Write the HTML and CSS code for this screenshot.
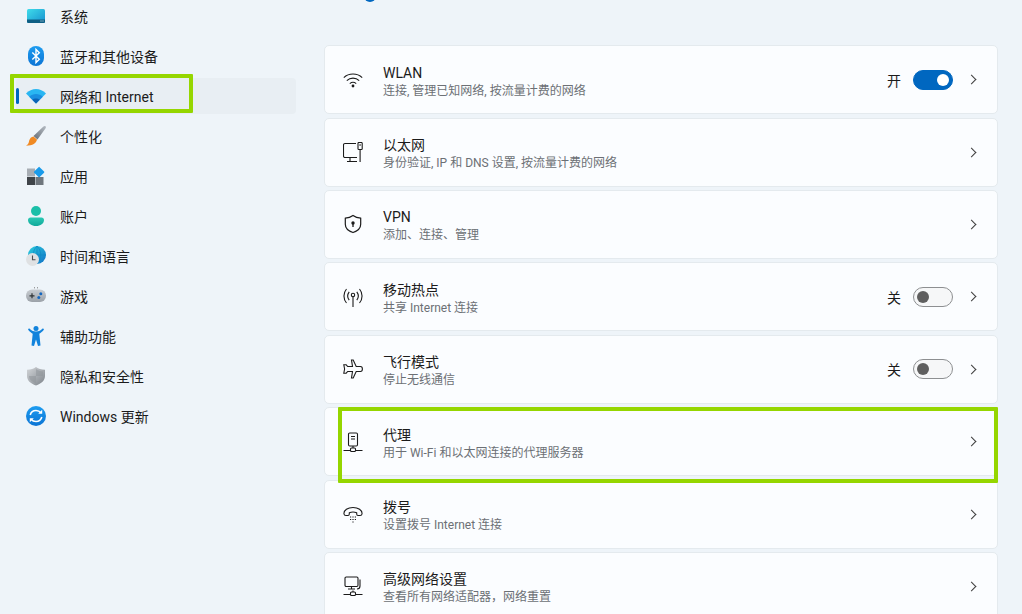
FILE: index.html
```html
<!DOCTYPE html>
<html lang="zh-CN">
<head>
<meta charset="utf-8">
<title>网络和 Internet</title>
<link rel="stylesheet" href="styles.css">
</head>
<body>
<svg class="defs" width="0" height="0" aria-hidden="true">
  <defs>
    <linearGradient id="gSys" x1="0" y1="0" x2="1" y2="1"><stop offset="0" stop-color="#3fdcea"/><stop offset="1" stop-color="#1690cf"/></linearGradient>
    <linearGradient id="gBlue" x1="0" y1="0" x2="0" y2="1"><stop offset="0" stop-color="#1d9cf0"/><stop offset="1" stop-color="#0c74d4"/></linearGradient>
    <linearGradient id="gBrush" x1="1" y1="0" x2="0" y2="1"><stop offset="0" stop-color="#b5bcc4"/><stop offset="1" stop-color="#666d75"/></linearGradient>
    <linearGradient id="gTeal" x1="0" y1="0" x2="0" y2="1"><stop offset="0" stop-color="#2cc9b4"/><stop offset="1" stop-color="#0fa89a"/></linearGradient>
    <linearGradient id="gGlobe" x1="0" y1="0" x2="1" y2="1"><stop offset="0" stop-color="#2bd0dd"/><stop offset="1" stop-color="#0f6fc6"/></linearGradient>
    <linearGradient id="gPad" x1="0" y1="0" x2="0" y2="1"><stop offset="0" stop-color="#c9cdd2"/><stop offset="1" stop-color="#9ba1a8"/></linearGradient>
    <linearGradient id="gShield" x1="0" y1="0" x2="1" y2="1"><stop offset="0" stop-color="#d3d6d9"/><stop offset="1" stop-color="#7d838a"/></linearGradient>
  </defs>
</svg>

<div class="top-dot"></div>

<div class="layout">
  <nav class="sidebar">
    <a class="nav-item">
      <svg class="nav-icon" viewBox="0 0 20 20"><rect x="1" y="3" width="18" height="14" rx="1.5" fill="url(#gSys)"/><path d="M1 13.5h18V15.5a1.5 1.5 0 0 1-1.500 1.500H2.500A1.500 1.500 0 0 1 1 15.500z" fill="#0f5f85"/><path d="M14.500 15h1M16.500 15h1" stroke="#cfeaf5" stroke-width="1"/></svg>
      <span>系统</span>
    </a>
    <a class="nav-item">
      <svg class="nav-icon" viewBox="0 0 20 20"><rect x="2" y="0" width="16" height="20" rx="8" fill="url(#gBlue)"/><path d="M6.300 6.500l7 6.800L10 16.500V3.500l3.300 3.200-7 6.800" fill="none" stroke="#fff" stroke-width="1.400"/></svg>
      <span>蓝牙和其他设备</span>
    </a>
    <a class="nav-item active">
      <svg class="nav-icon" viewBox="0 0 20 20"><path d="M0 7.500C5.500 1.500 14.500 1.500 20 7.500L10 17.500z" fill="#29b6f2"/><path d="M3.200 10.700C7 7 13 7 16.800 10.700L10 17.500z" fill="#1a8fe0"/><path d="M6.300 13.800C8.300 12 11.700 12 13.700 13.800L10 17.500z" fill="#0b62b5"/></svg>
      <span>网络和 Internet</span>
    </a>
    <a class="nav-item">
      <svg class="nav-icon" viewBox="0 0 20 20"><path d="M19.500.3c.6.500.5 1.400-.1 2.300L11.500 13.500 7.500 10 17.200.8c.8-.7 1.700-1 2.300-.5z" fill="url(#gBrush)"/><path d="M7.500 10.500l3.500 3c-.6 3.700-4.200 6-11 6.300 2.800-1.500 2.700-3.300 3.200-5.200.5-2 2.200-3.900 4.300-4.100z" fill="#f08a24"/></svg>
      <span>个性化</span>
    </a>
    <a class="nav-item">
      <svg class="nav-icon" viewBox="0 0 20 20"><rect x="1" y="2.500" width="8" height="8" fill="#a7adb4"/><rect x="1" y="11" width="8" height="8" fill="#3f4449"/><rect x="9.500" y="11" width="8" height="8" fill="#6f767d"/><rect x="9.200" y="2.200" width="7.800" height="7.800" rx=".8" transform="rotate(45 13.100 6.100)" fill="#1a9bea"/></svg>
      <span>应用</span>
    </a>
    <a class="nav-item">
      <svg class="nav-icon" viewBox="0 0 20 20"><circle cx="10" cy="5" r="5" fill="#1bbfa9"/><path d="M2 14c0-1.500 1-2.500 2.500-2.500h11c1.500 0 2.500 1 2.500 2.500 0 3.500-3.500 6-8 6s-8-2.500-8-6z" fill="url(#gTeal)"/></svg>
      <span>账户</span>
    </a>
    <a class="nav-item">
      <svg class="nav-icon" viewBox="0 0 20 20"><circle cx="11" cy="9" r="9" fill="url(#gGlobe)"/><path d="M11 0v18M2 9h18M11 0c-5 5-5 13 0 18M11 0c5 5 5 13 0 18" fill="none" stroke="#0e86c4" stroke-width=".7"/><circle cx="6.500" cy="13.500" r="6.500" fill="#dfe1e3"/><path d="M6.500 9.500v4.300h3" fill="none" stroke="#4a4d50" stroke-width="1.100"/></svg>
      <span>时间和语言</span>
    </a>
    <a class="nav-item">
      <svg class="nav-icon" viewBox="0 0 20 20"><rect x="0" y="3.500" width="20" height="12.500" rx="6" fill="url(#gPad)"/><path d="M3.500 9.800h5M6 7.300v5" stroke="#2f3336" stroke-width="1.200"/><circle cx="14.800" cy="7.800" r="1.500" fill="#1668c0"/><circle cx="12.800" cy="11.600" r="1.500" fill="#1668c0"/><path d="M8 1.800h1M11 1.800h1" stroke="#777" stroke-width="1"/></svg>
      <span>游戏</span>
    </a>
    <a class="nav-item">
      <svg class="nav-icon" viewBox="0 0 20 20"><circle cx="10" cy="2.500" r="2.500" fill="#1283dc"/><path d="M2 3.500L3 2.300C5 4.300 7 5.600 10 5.600S15 4.300 17 2.300L18 3.500C16.500 5.500 14.800 7 13.300 7.700L14.500 19.500 12 20 10 13.500 8 20 5.500 19.500 6.700 7.700C5.200 7 3.500 5.500 2 3.500z" fill="#1283dc"/></svg>
      <span>辅助功能</span>
    </a>
    <a class="nav-item">
      <svg class="nav-icon" viewBox="0 0 20 20"><path d="M10 1c2.500 1.800 5 2.700 9 2.800V10c0 4.500-3.500 7.500-9 9.500C4.500 17.500 1 14.500 1 10V3.800C5 3.700 7.500 2.800 10 1z" fill="url(#gShield)"/><path d="M10 3v14.300C6 15.800 3 13.500 3 10h7zM10 10h7c0-2 0-3 0-4.500-2.700-.2-5-1-7-2.500z" fill="#8f959b" opacity=".55"/></svg>
      <span>隐私和安全性</span>
    </a>
    <a class="nav-item">
      <svg class="nav-icon" viewBox="0 0 20 20"><circle cx="10" cy="10" r="10" fill="url(#gBlue)"/><path d="M4.200 9C5 6 7.400 4.500 10 4.500c2 0 3.700.8 4.800 2.300M15.800 11c-.8 3-3.200 4.500-5.800 4.500-2 0-3.700-.8-4.800-2.300" fill="none" stroke="#fff" stroke-width="1.600"/><path d="M16.200 3.800v4h-4zM3.800 16.200v-4h4z" fill="#fff"/></svg>
      <span>Windows 更新</span>
    </a>
  </nav>

  <main class="cards">
    <section class="card">
      <svg class="card-icon" viewBox="0 0 20 20"><path d="M.8 7.600C5.800 2.800 14.200 2.800 19.200 7.600M3.800 10.700C7.300 7.300 12.700 7.300 16.200 10.700M6.800 13.600C8.700 12 11.300 12 13.200 13.600" fill="none" stroke="currentColor" stroke-width="1.100"/><circle cx="10" cy="16" r="1.400" fill="currentColor"/></svg>
      <div class="card-text"><div class="card-title">WLAN</div><div class="card-sub">连接, 管理已知网络, 按流量计费的网络</div></div>
      <div class="card-end"><span class="state">开</span><span class="toggle on"></span><span class="chev"></span></div>
    </section>
    <section class="card">
      <svg class="card-icon" viewBox="0 0 20 20"><path d="M13 1.500H2A1.500 1.500 0 0 0 .5 3v11A1.500 1.500 0 0 0 2 15.500h12M7 15.500v3.500M4 19.500h10" fill="none" stroke="currentColor" stroke-width="1.100"/><rect x="15" y=".5" width="4.200" height="7" rx=".8" fill="none" stroke="currentColor" stroke-width="1.100"/><path d="M16.200 3h1.800M17.100 7.500V20" fill="none" stroke="currentColor" stroke-width="1.100"/></svg>
      <div class="card-text"><div class="card-title">以太网</div><div class="card-sub">身份验证, IP 和 DNS 设置, 按流量计费的网络</div></div>
      <div class="card-end"><span class="chev"></span></div>
    </section>
    <section class="card">
      <svg class="card-icon" viewBox="0 0 20 20"><path d="M10 1.500c2.300 1.700 4.800 2.500 7.700 2.700v6c0 4-3 6.700-7.700 8.300-4.700-1.600-7.700-4.300-7.700-8.300v-6C5.200 4 7.700 3.200 10 1.500z" fill="none" stroke="currentColor" stroke-width="1.200"/><circle cx="10" cy="9" r="1.700" fill="currentColor"/><path d="M10 9v4" stroke="currentColor" stroke-width="1.300"/></svg>
      <div class="card-text"><div class="card-title">VPN</div><div class="card-sub">添加、连接、管理</div></div>
      <div class="card-end"><span class="chev"></span></div>
    </section>
    <section class="card">
      <svg class="card-icon" viewBox="0 0 20 20"><path d="M3.500 2C.1 6 .1 12 3.500 16M16.500 2c3.400 4 3.400 10 0 14M6.200 4.800C4.200 7.500 4.200 10.500 6.200 13.200M13.800 4.800c2 2.700 2 5.700 0 8.400" fill="none" stroke="currentColor" stroke-width="1.100"/><circle cx="10" cy="8" r="1.700" fill="none" stroke="currentColor" stroke-width="1.100"/><path d="M10 9.700V20" stroke="currentColor" stroke-width="1.100"/></svg>
      <div class="card-text"><div class="card-title">移动热点</div><div class="card-sub">共享 Internet 连接</div></div>
      <div class="card-end"><span class="state">关</span><span class="toggle"></span><span class="chev"></span></div>
    </section>
    <section class="card">
      <svg class="card-icon" viewBox="0 0 20 20"><path d="M8.500 1h1.700l3 6.500h4.300c1.100 0 1.900 1.100 1.900 2.500s-.8 2.500-1.900 2.500h-4.300l-3 6.500H8.500l1-6.500H4.700L3.200 14.200H.8l.8-4.200-.8-4.200h2.400l1.500 1.700h4.800z" fill="none" stroke="currentColor" stroke-width="1.100"/></svg>
      <div class="card-text"><div class="card-title">飞行模式</div><div class="card-sub">停止无线通信</div></div>
      <div class="card-end"><span class="state">关</span><span class="toggle"></span><span class="chev"></span></div>
    </section>
    <section class="card">
      <svg class="card-icon" viewBox="0 0 20 20"><rect x="5.500" y="1" width="9" height="13" rx="1.200" fill="none" stroke="currentColor" stroke-width="1.100"/><path d="M8 4.500h4M8 7h4M10 14v2M.5 18.500h19" fill="none" stroke="currentColor" stroke-width="1.100"/><rect x="7.500" y="16" width="5" height="3.500" rx="1" fill="#fbfdff" stroke="currentColor" stroke-width="1.100"/></svg>
      <div class="card-text"><div class="card-title">代理</div><div class="card-sub">用于 Wi-Fi 和以太网连接的代理服务器</div></div>
      <div class="card-end"><span class="chev"></span></div>
    </section>
    <section class="card">
      <svg class="card-icon" viewBox="0 0 20 20"><path d="M1 10C.5 6 5 3.500 10 3.500s9.500 2.500 9 6.500c-.1 1-1 1.500-2 1.500h-2c-.8 0-1.300-.6-1.300-1.400V8.800c-2.400-1-5-1-7.400 0v1.300c0 .8-.5 1.400-1.300 1.400H3c-1 0-1.900-.5-2-1.500z" fill="none" stroke="currentColor" stroke-width="1.100"/><path d="M7 13h1.200M9.400 13h1.200M11.800 13H13M7 15.500h1.200M9.400 15.500h1.200M11.800 15.500H13M9.400 18h1.200" stroke="currentColor" stroke-width="1.200"/></svg>
      <div class="card-text"><div class="card-title">拨号</div><div class="card-sub">设置拨号 Internet 连接</div></div>
      <div class="card-end"><span class="chev"></span></div>
    </section>
    <section class="card">
      <svg class="card-icon" viewBox="0 0 20 20"><rect x="2" y="1" width="13" height="9.500" rx="1.200" fill="none" stroke="currentColor" stroke-width="1.100"/><path d="M5 13h7M8.500 10.500V13M17 3.500v6.500c0 2-1 3-3 3M.5 18.500h19M10 14.500v2" fill="none" stroke="currentColor" stroke-width="1.100"/><rect x="7.500" y="16" width="5" height="3.500" rx="1" fill="#fbfdff" stroke="currentColor" stroke-width="1.100"/></svg>
      <div class="card-text"><div class="card-title">高级网络设置</div><div class="card-sub">查看所有网络适配器，网络重置</div></div>
      <div class="card-end"><span class="chev"></span></div>
    </section>
  </main>
</div>

<div class="mark mark-nav"></div>
<div class="mark mark-proxy"></div>
</body>
</html>
```
FILE: styles.css
```css
* { box-sizing: border-box; }
html, body { height: 100%; }
body {
  margin: 0;
  overflow: hidden;
  position: relative;
  background: #eef4f9;
  color: #1b1b1b;
  font-family: Roboto, "Noto Sans CJK SC", sans-serif;
}
.defs { position: absolute; }
.layout { display: flex; align-items: flex-start; }

.sidebar {
  width: 280px;
  margin: -2px 0 0 16px;
  display: flex;
  flex-direction: column;
  gap: 4px;
  flex: none;
}
.nav-item {
  position: relative;
  height: 36px;
  display: flex;
  align-items: center;
  gap: 14px;
  padding-left: 10px;
  font-size: 14px;
  border-radius: 4px;
}
.nav-item.active { background: #e8eef3; }
.nav-item.active::before {
  content: "";
  position: absolute;
  left: 0;
  top: 10px;
  width: 3px;
  height: 16px;
  border-radius: 2px;
  background: #0067c0;
}
.nav-icon { width: 20px; height: 20px; flex: none; }

.cards {
  width: 674px;
  margin: 45.2px 0 0 28px;
  display: flex;
  flex-direction: column;
  gap: 3.4px;
  flex: none;
}
.card {
  height: 69px;
  display: flex;
  align-items: center;
  padding: 0 20px 0 18px;
  background: #fbfdff;
  border: 1px solid #e4eaee;
  border-radius: 5px;
}
.card-icon { width: 20px; height: 20px; flex: none; margin-right: 20px; color: #1b1b1b; }
.card-text { flex: 1; min-width: 0; padding-top: 5px; }
.card-title { font-size: 14px; line-height: 17px; }
.card-sub { font-size: 12px; line-height: 18px; color: #6c7075; }
.card-end { display: flex; align-items: center; }
.state { font-size: 14px; margin-right: 12px; }
.toggle {
  position: relative;
  width: 40px;
  height: 20px;
  margin-right: 15px;
  border: 1px solid #8d8f91;
  border-radius: 10px;
  background: #f6f7f8;
}
.toggle::after {
  content: "";
  position: absolute;
  left: 3px;
  top: 3px;
  width: 12px;
  height: 12px;
  border-radius: 50%;
  background: #5f5f5f;
}
.toggle.on { background: #0067c0; border-color: #0067c0; }
.toggle.on::after { left: 23px; background: #fff; }
.chev {
  width: 7px;
  height: 7px;
  margin-right: 2px;
  border-top: 1.2px solid #3d3d3d;
  border-right: 1.2px solid #3d3d3d;
  transform: rotate(45deg);
}

.top-dot {
  position: absolute;
  left: 364px;
  top: -10px;
  width: 12px;
  height: 12px;
  border-radius: 50%;
  background: #0067c0;
}
.mark { position: absolute; border: solid #95d600; border-radius: 1px; pointer-events: none; }
.mark-nav { left: 10px; top: 74px; width: 183px; height: 39px; border-width: 4px; }
.mark-proxy { left: 338px; top: 407px; width: 660px; height: 76px; border-width: 4px; }
```
